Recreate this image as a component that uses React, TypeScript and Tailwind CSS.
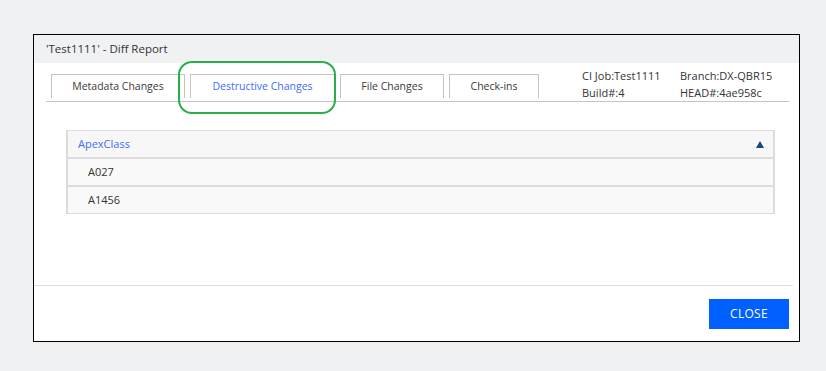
import React from "react";

const font = { fontFamily: '"Open Sans", "Liberation Sans", sans-serif' };

function Tab({ label, active, w }: { label: string; active?: boolean; w: string }) {
  return (
    <div
      className={`${w} h-[24px] mb-[3px] border-t border-x border-[#c4c4c4] bg-white flex items-center justify-center text-[10.5px] ${
        active ? "text-[#3d6bff]" : "text-[#3a3a3a]"
      }`}
    >
      {label}
    </div>
  );
}

export default function App() {
  return (
    <div className="relative w-[826px] h-[371px] bg-[#eff0f2] pt-[34px] pl-[33px]" style={font}>
      <div className="w-[767px] h-[308px] border border-black bg-white flex flex-col">
        <div className="h-[28px] bg-[#f0f1f3] flex items-center pl-[12px] text-[11.5px] text-[#333]">
          'Test1111' - Diff Report
        </div>
        <div className="h-[222px] pl-[12px] pr-[10px] pt-[11px]">
          <div className="h-[28px] flex items-end border-b border-[#c4c4c4] pl-[5px]">
            <div className="flex gap-[5px]">
              <Tab label="Metadata Changes" w="w-[134px]" />
              <Tab label="Destructive Changes" w="w-[145px]" active />
              <Tab label="File Changes" w="w-[104px]" />
              <Tab label="Check-ins" w="w-[90px]" />
            </div>
            <div className="ml-[43px] self-start -mt-[6px] grid grid-cols-[98px_auto] text-[11px] leading-[16.5px] text-[#333]">
              <span>CI Job:Test1111</span>
              <span>Branch:DX-QBR15</span>
              <span>Build#:4</span>
              <span>HEAD#:4ae958c</span>
            </div>
          </div>
          <div className="mt-[28px] ml-[20px] mr-[14px] flex flex-col text-[11px]">
            <div className="h-[28px] border-y border-x-2 border-[#dcdcdc] bg-[#f7f7f7] flex items-center justify-between pl-[10px] pr-[9px]">
              <span className="text-[#3d6bff]">ApexClass</span>
              <svg width="8" height="7" viewBox="0 0 8 7">
                <path d="M4 0 L8 7 L0 7 Z" fill="#16467c" />
              </svg>
            </div>
            <div className="h-[28px] border-y border-x-2 border-[#dcdcdc] bg-[#f9f9f9] flex items-center pl-[20px] text-[#333]">
              A027
            </div>
            <div className="h-[28px] border-y border-x-2 border-[#dcdcdc] bg-[#f9f9f9] flex items-center pl-[20px] text-[#333]">
              A1456
            </div>
          </div>
        </div>
        <div className="border-t border-[#dedede] mr-[6px]" />
        <div className="flex-1 flex items-center justify-end pr-[10px]">
          <button className="w-[80px] h-[30px] bg-[#005fff] text-white text-[12px] tracking-[0.3px]">
            CLOSE
          </button>
        </div>
      </div>
      <div className="absolute left-[178px] top-[61px] w-[158px] h-[53px] border-2 border-[#2aae48] rounded-[14px]" />
    </div>
  );
}
